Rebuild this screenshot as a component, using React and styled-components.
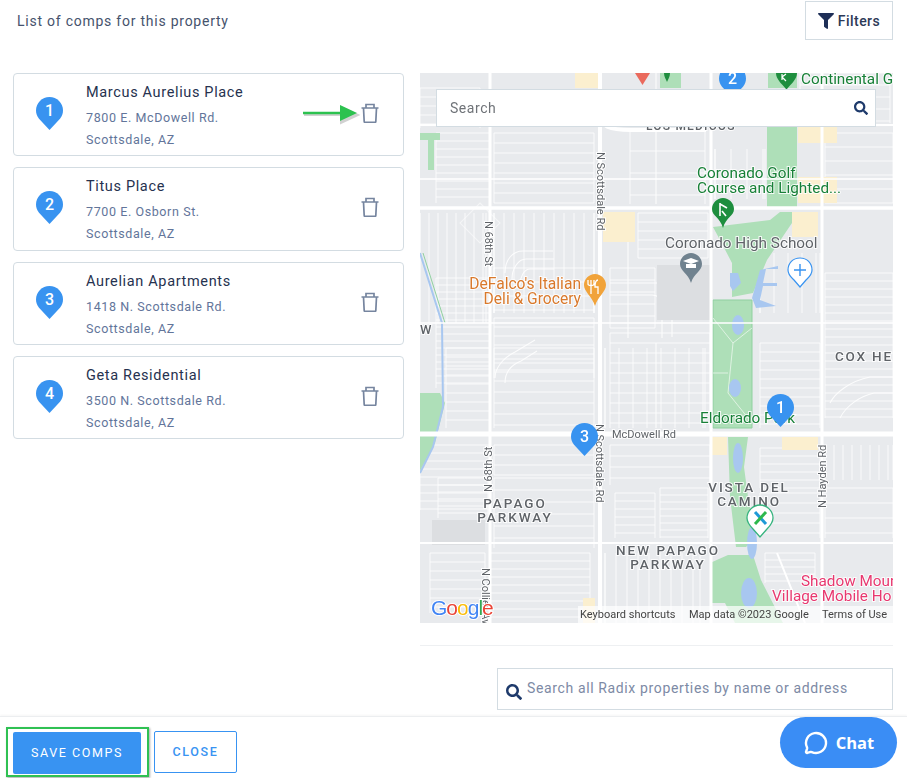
import React from "react";
import styled, { createGlobalStyle } from "styled-components";
import { FaFilter, FaSearch } from "react-icons/fa";
import { MessageCircle } from "lucide-react";

const Global = createGlobalStyle`
  html, body { margin: 0; padding: 0; background: #fff; overflow: hidden; }
  body { font-family: Roboto, "Liberation Sans", sans-serif; }
  * { box-sizing: border-box; }
`;

const Page = styled.div`
  position: relative; width: 907px; height: 778px; display: flex; flex-direction: column; overflow: hidden;
`;
const TopBar = styled.div`
  height: 73px; padding: 1px 14px 33px 17px; display: flex; justify-content: space-between; align-items: center;
`;
const Title = styled.div`
  font-size: 14px; letter-spacing: .76px; color: #46536d;
`;
const FilterButton = styled.button`
  width: 88px; height: 39px; background: #fff; border: 1px solid #d3dce2; font: 500 14px Roboto, sans-serif;
  letter-spacing: .45px; color: #2c3a57; display: flex; align-items: center; justify-content: center; gap: 4px; padding: 0;
  svg { color: #1e2f57; font-size: 16px; }
`;
const Content = styled.div`
  display: flex; padding: 0 14px 0 13px; gap: 16px; height: 550px;
`;
const List = styled.div`
  width: 391px; display: flex; flex-direction: column; gap: 11px;
`;
const Card = styled.div`
  position: relative; height: 83.25px; border: 1px solid #d3dce2; border-radius: 4px; display: flex; align-items: center;
  padding: 0 23px 0 22px;
`;
const PinSlot = styled.div`
  width: 50px; height: 33px; flex: none; margin-top: -2px;
`;
const Info = styled.div`
  flex: 1; display: flex; flex-direction: column; margin-top: 5px;
`;
const Name = styled.div`
  font-size: 14.5px; font-weight: 400; letter-spacing: .65px; color: #26324f; line-height: 20px; margin-bottom: 4px;
`;
const Addr = styled.div`
  font-size: 12.5px; letter-spacing: .6px; color: #62759a; line-height: 22px;
`;
const Trash = styled.svg`
  width: 20px; height: 20px; flex: none; fill: none; stroke: #76859f; stroke-width: 1.7; margin-top: -3px;
`;
const Arrow = styled.svg`
  position: absolute; left: 288px; top: 27px; width: 56px; height: 22px; overflow: visible;
`;
const MapBox = styled.div`
  position: relative; width: 473px; height: 550px; overflow: hidden; background: #e8eaed;
`;
const MapSvg = styled.svg`
  display: block; width: 473px; height: 550px;
`;
const MapSearch = styled.div`
  position: absolute; left: 16px; top: 16px; width: 440px; height: 38px; background: #fff; border: 1px solid #d3dce2;
  display: flex; align-items: center; justify-content: space-between; padding: 0 7px 0 13px;
  svg { color: #1e3a6b; font-size: 14px; }
`;
const MapInput = styled.input`
  border: 0; outline: 0; flex: 1; padding: 0; font: 14px Roboto, sans-serif; letter-spacing: .55px;
  &::placeholder { color: #6f7378; opacity: 1; }
`;
const Lower = styled.div`
  flex: 1; display: flex; flex-direction: column; align-items: flex-end; padding: 22px 14px 0 0;
`;
const Rule = styled.div`
  width: 473px; height: 1px; background: #eef0f2;
`;
const AllSearch = styled.div`
  margin-top: 22px; width: 396px; height: 42px; border: 1px solid #d3dce2; display: flex; align-items: center; gap: 5px; padding: 0 0 0 8px;
  svg { color: #1e3a6b; font-size: 16px; margin-top: 6px; flex: none; }
`;
const AllInput = styled.input`
  border: 0; outline: 0; flex: 1; min-width: 0; padding: 0 0 3px; font: 14px Roboto, sans-serif; letter-spacing: .63px;
  &::placeholder { color: #7d8aa5; opacity: 1; }
`;
const Footer = styled.div`
  height: 62px; flex: none; border-top: 1px solid #eceef0; box-shadow: 0 -1px 2px rgba(0,0,0,.04); display: flex; align-items: flex-start;
  padding: 10px 0 0 6px; gap: 5px;
`;
const Highlight = styled.div`
  border: 2px solid #2fc153; padding: 3px 6px 1px 5px; height: 50px; width: 143px; box-shadow: 1px 1px 2px rgba(0,0,0,.35);
`;
const BaseBtn = styled.button`
  height: 42px; border-radius: 2px; font: 400 12.5px Roboto, sans-serif; letter-spacing: 1.6px; padding: 0 0 2px;
`;
const Save = styled(BaseBtn)`
  width: 128px; background: #3893f2; border: 0; color: #fff;
`;
const Close = styled(BaseBtn)`
  width: 83px; margin-top: 4px; background: #fff; border: 1px solid #3893f2; color: #3893f2; font-weight: 500;
`;
const Chat = styled.button`
  position: absolute; left: 780px; top: 717px; width: 117px; height: 51px; border-radius: 26px; background: #3a8df5; border: 0;
  color: #fff; font: 700 16.5px "Open Sans", Roboto, sans-serif; display: flex; align-items: center; justify-content: center; gap: 8px; padding: 0 0 0 1px;
`;
const PinNumber = styled.text`
  font: 500 16px Roboto, sans-serif; fill: #fff; text-anchor: middle;
`;
const MapText = styled.text`
  font-family: Roboto, sans-serif; font-size: ${p => p.$size || 14}px; fill: ${p => p.$color};
  font-weight: ${p => p.$weight || 400}; letter-spacing: ${p => p.$ls || 0}px; text-anchor: ${p => p.$anchor || "start"};
  paint-order: stroke; stroke: #fff; stroke-width: ${p => p.$halo ?? 2}px; stroke-opacity: .85;
`;
const Logo = styled.text`
  font: 400 21px "Liberation Sans", Arial, sans-serif; letter-spacing: -1px; paint-order: stroke; stroke: #fff; stroke-width: 2px;
`;

const Pin = ({ n, x = 0, y = 0 }) => (
  <g transform={`translate(${x} ${y})`}>
    <path d="M13.5 0C6 0 0 6 0 13.5c0 3 1 5.8 3 8.2L13.5 33 24 21.7c2-2.4 3-5.2 3-8.2C27 6 21 0 13.5 0z" fill="#3893f0" />
    <PinNumber x="13.5" y="19">{n}</PinNumber>
  </g>
);
const ListPin = ({ n }) => (
  <svg width="27" height="33" viewBox="0 0 27 33" style={{ display: "block" }}><Pin n={n} /></svg>
);
const TrashIcon = () => (
  <Trash viewBox="0 0 20 20"><path d="M1.500 5h17M6 5V1.500h8V5M3.500 5l.7 13.600c0 .5.3.7.7.7h10.200c.4 0 .7-.2.7-.7L16.500 5" /></Trash>
);

const comps = [
  ["Marcus Aurelius Place", "7800 E. McDowell Rd.", "Scottsdale, AZ"],
  ["Titus Place", "7700 E. Osborn St.", "Scottsdale, AZ"],
  ["Aurelian Apartments", "1418 N. Scottsdale Rd.", "Scottsdale, AZ"],
  ["Geta Residential", "3500 N. Scottsdale Rd.", "Scottsdale, AZ"],
];

const blocks = [
  [16,60,54,70,8,"h"],[74,60,100,70,10,"h"],[0,15,60,40,9,"h"],
  [210,56,75,75,22,"h"],[295,76,50,50,16,"v"],[380,0,90,50,12,"h"],[405,60,68,70,14,"h"],
  [0,140,66,110,9,"v"],[74,140,100,100,10,"v"],[218,140,70,45,9,"h"],
  [16,205,54,110,7,"h"],[74,195,100,45,14,"h"],[74,245,100,60,9,"h"],[190,195,45,60,12,"h"],
  [190,260,100,95,10,"h"],[405,200,68,145,8,"h"],[340,270,60,85,9,"h"],[340,180,60,60,14,"v"],
  [26,275,44,80,9,"h"],[74,275,100,80,11,"h"],[185,275,100,80,14,"v"],
  [0,372,70,65,8,"h"],[74,372,100,30,10,"h"],[18,405,50,40,7,"h"],[74,405,100,70,12,"h"],
  [190,372,100,40,11,"h"],[195,420,40,45,8,"h"],[240,415,48,50,7,"h"],[340,375,60,40,8,"h"],
  [340,420,60,45,10,"h"],[405,372,68,35,9,"v"],[405,415,68,50,15,"h"],
  [70,480,100,70,8,"h"],[10,480,55,60,9,"h"],[185,480,95,70,11,"v"],[345,480,50,30,7,"h"],
];
const Roads = () => {
  const out = [];
  blocks.forEach(([x, y, w, h, s, d], i) => {
    const p = [];
    if (d === "h") for (let yy = y; yy <= y + h; yy += s) p.push(`M${x} ${yy}h${w}`);
    else for (let xx = x; xx <= x + w; xx += s) p.push(`M${xx} ${y}v${h}`);
    p.push(`M${x} ${y}v${h}M${x + w} ${y}v${h}`);
    out.push(<path key={i} d={p.join("")} stroke="#fff" strokeWidth="1" fill="none" opacity=".8" />);
  });
  return <g>{out}</g>;
};
const Curves = () => (
  <g fill="none" stroke="#fff" strokeWidth="1.1" opacity=".85">
    <path d="M85 200c0-14 8-22 18-22h30M92 206c0-10 6-20 14-20h28M100 212c0-8 4-16 10-16h24" />
    <path d="M75 305c0-10 8-20 20-26l20-12M85 310c0-10 6-18 16-22l16-10" />
    <path d="M410 330c5-10 20-22 40-26h23M420 345c6-12 20-22 34-25h19" />
    <path d="M236 0v131M208 140v125M236 270v85" />
    <path d="M60 130l20 20-20 20-20-20z" opacity=".6" />
    <path d="M190 210h50c8 0 12 6 12 14v40M190 222h42c6 0 10 4 10 10v33" />
  </g>
);

const labels = [
  ["Continental G", 381, 11, 15.3, "#188038"],
  ["LOS MEDICOS", 226, 57, 12, "#5f6368", 1.2, 500],
  ["Coronado Golf", 277, 105, 15.3, "#188038"],
  ["Course and Lighted...", 277, 120, 15.3, "#188038"],
  ["Coronado High School", 245, 175, 15.3, "#5f6368"],
  ["DeFalco's Italian", 161, 216, 15.6, "#d9792c", 0, 400, "end"],
  ["Deli & Grocery", 161, 231, 15.6, "#d9792c", 0, 400, "end"],
  ["W", 0, 261, 13, "#5f6368", 1, 500],
  ["COX HE", 415, 288, 13.5, "#5f6368", 1.8, 500],
  ["Eldorado Park", 280, 350, 15.3, "#188038"],
  ["VISTA DEL", 329, 419, 13.5, "#5f6368", 1.9, 500, "middle"],
  ["CAMINO", 329, 433, 13.5, "#5f6368", 1.9, 500, "middle"],
  ["PAPAGO", 95, 435, 13.5, "#5f6368", 2, 500, "middle"],
  ["PARKWAY", 95, 449, 13.5, "#5f6368", 2, 500, "middle"],
  ["NEW PAPAGO", 248, 482, 13.5, "#5f6368", 2, 500, "middle"],
  ["PARKWAY", 248, 496, 13.5, "#5f6368", 2, 500, "middle"],
  ["Shadow Moun", 381, 513, 15.3, "#e8386f"],
  ["Village Mobile Ho", 352, 528, 15.3, "#e8386f"],
  ["McDowell Rd", 192, 365, 11, "#5f6368"],
];
const vLabels = [
  ["N Scottsdale Rd", 177, 79, 1],
  ["N 68th St", 65, 148, 1],
  ["N Scottsdale Rd", 176, 351, 1],
  ["N 68th St", 72, 419, -1],
  ["N Hayden Rd", 406, 435, -1],
  ["N Collier Ave", 62, 495, 1],
];

const MapArt = () => (
  <MapSvg viewBox="0 0 473 550">
    <rect width="473" height="550" fill="#e8eaed" />
    <Roads />
    <Curves />
    <g fill="#dcdee1">
      <rect x="237" y="192" width="53" height="55" />
      <rect x="12" y="447" width="53" height="25" />
      <rect x="290" y="504" width="27" height="26" />
    </g>
    <g fill="#fbefcf">
      <rect x="183" y="139" width="32" height="30" />
      <rect x="372" y="139" width="26" height="25" />
      <rect x="378" y="104" width="39" height="26" />
      <rect x="378" y="54" width="39" height="16" />
      <rect x="155" y="0" width="24" height="15" />
      <rect x="290" y="364" width="17" height="18" />
      <rect x="362" y="364" width="36" height="13" />
      <rect x="163" y="525" width="12" height="25" />
    </g>
    <g fill="#aedfb8">
      <rect x="240" y="0" width="21" height="15" />
      <rect x="348" y="0" width="29" height="15" />
      <rect x="347" y="54" width="30" height="80" />
      <path d="M293 154 350 147 360 139 372 139 372 150 347 187 333 220 312 224 312 190 300 167z" />
      <rect x="293" y="227" width="39" height="128" />
      <path d="M308 364h20l-4 30 4 30 8 40-10 10h-10l-6-50z" />
      <path d="M290 490l18-8h25l8 25 22 43h-48l-10-20h-15z" />
      <path d="M0 60h20v7h-6v30H8V67H0zM0 320h20l5 10-10 40-15 28z" />
    </g>
    <path d="M293 227h39v128h-39z" fill="none" stroke="#8fd09f" strokeWidth="1" />
    <g fill="none" stroke="#fff" strokeWidth="1" opacity=".6">
      <path d="M293 245l20 25 19-15M313 270l-5 50 20 25M293 300h15" />
    </g>
    <g fill="#a8c7f0">
      <path d="M310 200h8l3 10-8 8-3-5zM340 197l18-4v3h-12l-3 14h14v3h-14l-3 14 16 6-20 2-4-10z" />
      <ellipse cx="318" cy="252" rx="6" ry="10" />
      <ellipse cx="318" cy="385" rx="5" ry="15" />
      <ellipse cx="315" cy="315" rx="6" ry="9" />
      <ellipse cx="329" cy="520" rx="8" ry="15" />
      <ellipse cx="332" cy="470" rx="5" ry="16" />
    </g>
    <path d="M0 180 22 250 23 334 13 374 0 400" fill="none" stroke="#a8c7f0" strokeWidth="2" />
    <path d="M3 180 25 250" fill="none" stroke="#8fd09f" strokeWidth="1" />
    <g stroke="#fff" fill="none">
      <path d="M180 0v550M181 40c-3 14 10 17 30 17h75" strokeWidth="4" />
      <path d="M70 0v550M291 0v550M402 0v550" strokeWidth="3" />
      <path d="M0 135h473" strokeWidth="3.5" />
      <path d="M0 361h473" strokeWidth="5" />
      <path d="M0 470h473M0 52h473" strokeWidth="2" />
      <path d="M0 250h473M0 106h473" strokeWidth="1.5" />
      <path d="M357 480l28 70" strokeWidth="2" />
    </g>
    {labels.map(([t, x, y, s, c, ls, w, a]) => (
      <MapText key={t + y} x={x} y={y} $size={s} $color={c} $ls={ls} $weight={w} $anchor={a}>{t}</MapText>
    ))}
    {vLabels.map(([t, x, y, dir]) => (
      <MapText key={t + y} x={x} y={y} $size={11} $color="#5f6368"
        transform={`rotate(${dir * 90} ${x} ${y})`}>{t}</MapText>
    ))}

    <path d="M215 0h15l-7.500 12z" fill="#ea6a5d" />
    <path d="M303 125c-6 0-11 5-11 11 0 7 8 8 11 19 3-11 11-12 11-19 0-6-5-11-11-11z" fill="#1e8e3e" />
    <path d="M300 130v13M300 131l7 4M302 138l4 5" stroke="#fff" strokeWidth="1.600" fill="none" />
    <path d="M377 0c0 6-5 10-10 16h-1c-5-6-10-10-10-16z" fill="#1e8e3e" />
    <path d="M362 1v6M362 4l4-3M362 4l4 4" stroke="#fff" strokeWidth="1.200" fill="none" />
    <path d="M250 0c0 4-2 6-3 9-1-3-3-5-3-9z" fill="#1e8e3e" />
    <path d="M271 180c-6 0-11 5-11 11 0 7 8 9 11 19 3-10 11-12 11-19 0-6-5-11-11-11z" fill="#70828f" />
    <path d="M263 188l8-3 8 3-8 3zM266 191v4h10v-4" fill="#fff" />
    <path d="M175 201c-6 0-11 5-11 11 0 7 8 11 11 21 3-10 11-14 11-21 0-6-5-11-11-11z" fill="#f1a33a" />
    <path d="M171 207v14M168 207v4c0 2 6 2 6 0v-4M178 207c-2 0-3 3-3 7h3v7" stroke="#fff" strokeWidth="1.300" fill="none" />
    <path d="M380 185c-7 0-12 5-12 12 0 5 3 7 6 10l6 7 6-7c3-3 6-5 6-10 0-7-5-12-12-12z" fill="#fff" stroke="#3893f0" strokeWidth="1.200" />
    <path d="M380 191v12M374 197h12" stroke="#3893f0" strokeWidth="1.400" />
    <path d="M340 432c-7 0-13 6-13 13 0 5 3 8 6 11l7 8 7-8c3-3 6-6 6-11 0-7-6-13-13-13z" fill="#fff" stroke="#36b37e" strokeWidth="1.300" />
    <path d="M335 439l11 12" stroke="#1f9ad6" strokeWidth="3" />
    <path d="M346 439l-11 12" stroke="#2db84d" strokeWidth="3" />
    <Pin n="2" x="299" y="-8" />
    <Pin n="1" x="347" y="321" />
    <Pin n="3" x="151" y="350" />
    <rect x="158" y="533" width="315" height="17" fill="#fff" opacity=".7" />
    <MapText x="160" y="545" $size={11} $color="#444" $halo={0}>Keyboard shortcuts</MapText>
    <MapText x="269" y="545" $size={11} $color="#444" $halo={0}>Map data ©2023 Google</MapText>
    <MapText x="402" y="545" $size={11} $color="#444" $halo={0}>Terms of Use</MapText>
    <Logo x="11" y="542">
      <tspan fill="#4285f4">G</tspan><tspan fill="#ea4335">o</tspan><tspan fill="#fbbc05">o</tspan><tspan fill="#4285f4">g</tspan><tspan fill="#34a853">l</tspan><tspan fill="#ea4335">e</tspan>
    </Logo>
  </MapSvg>
);

export default function App() {
  return (
    <Page>
      <Global />
      <TopBar>
        <Title>List of comps for this property</Title>
        <FilterButton><FaFilter />Filters</FilterButton>
      </TopBar>
      <Content>
        <List>
          {comps.map(([n, a, c], i) => (
            <Card key={n}>
              <PinSlot><ListPin n={i + 1} /></PinSlot>
              <Info>
                <Name>{n}</Name>
                <Addr>{a}</Addr>
                <Addr>{c}</Addr>
              </Info>
              <TrashIcon />
              {i === 0 && (
                <Arrow viewBox="0 0 56 22">
                  <path d="M1 13h38M38 5l17 8-17 8z" fill="#9a9a9a" stroke="#9a9a9a" strokeWidth="2" opacity=".45" transform="translate(1 1)" />
                  <path d="M1 12h38" stroke="#2cc24f" strokeWidth="2.400" />
                  <path d="M38 4l17 8-17 8z" fill="#2cc24f" />
                </Arrow>
              )}
            </Card>
          ))}
        </List>
        <MapBox>
          <MapArt />
          <MapSearch>
            <MapInput placeholder="Search" />
            <FaSearch />
          </MapSearch>
        </MapBox>
      </Content>
      <Lower>
        <Rule />
        <AllSearch>
          <FaSearch />
          <AllInput placeholder="Search all Radix properties by name or address" />
        </AllSearch>
      </Lower>
      <Footer>
        <Highlight><Save>SAVE COMPS</Save></Highlight>
        <Close>CLOSE</Close>
      </Footer>
      <Chat><MessageCircle size={24} strokeWidth={2.4} />Chat</Chat>
    </Page>
  );
}
